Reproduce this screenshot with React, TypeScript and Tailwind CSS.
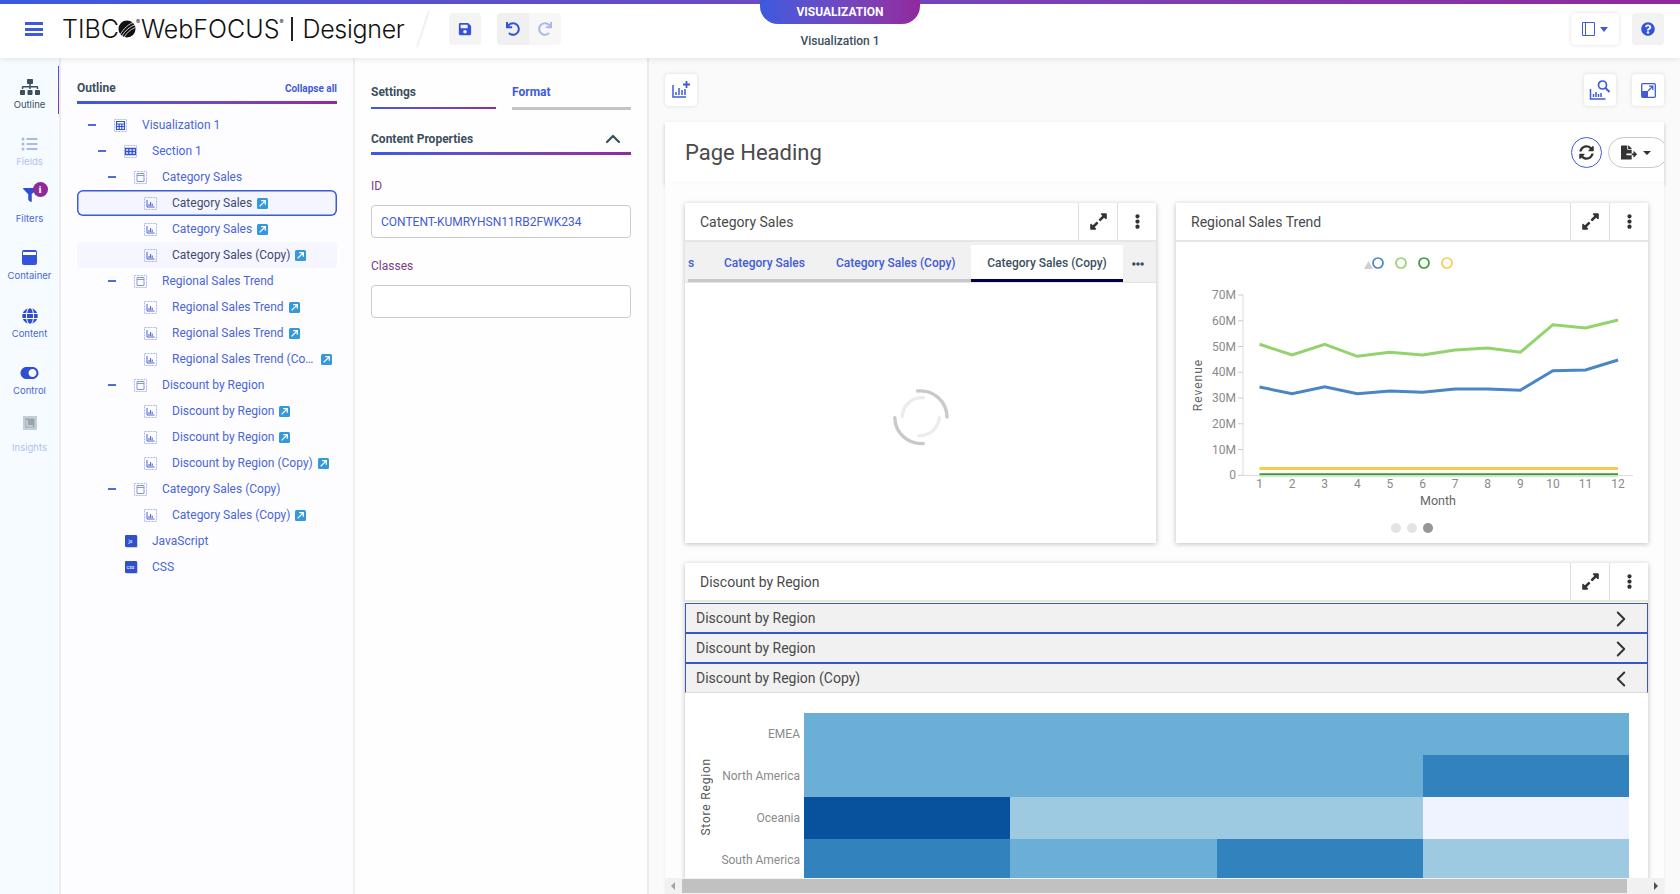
import type { ReactNode } from "react";
import { ChevronLeft, ChevronRight, ChevronUp } from "lucide-react";
import {
  FaEllipsisH,
  FaEllipsisV,
  FaExpandAlt,
  FaFileExport,
  FaFilter,
  FaGlobe,
  FaListUl,
  FaQuestionCircle,
  FaRedo,
  FaSave,
  FaSitemap,
  FaSyncAlt,
  FaToggleOn,
  FaUndo,
} from "react-icons/fa";

const GRADIENT = "bg-gradient-to-r from-[#3a5ae0] to-[#92289f]";

type RowKind = "viz" | "section" | "frame" | "chart" | "js" | "css";

interface TreeRow {
  label: string;
  level: number;
  kind: RowKind;
  dash?: boolean;
  link?: boolean;
  state?: "selected" | "hover";
}

const treeRows: TreeRow[] = [
  { label: "Visualization 1", level: 0, kind: "viz", dash: true },
  { label: "Section 1", level: 1, kind: "section", dash: true },
  { label: "Category Sales", level: 2, kind: "frame", dash: true },
  { label: "Category Sales", level: 3, kind: "chart", link: true, state: "selected" },
  { label: "Category Sales", level: 3, kind: "chart", link: true },
  { label: "Category Sales (Copy)", level: 3, kind: "chart", link: true, state: "hover" },
  { label: "Regional Sales Trend", level: 2, kind: "frame", dash: true },
  { label: "Regional Sales Trend", level: 3, kind: "chart", link: true },
  { label: "Regional Sales Trend", level: 3, kind: "chart", link: true },
  { label: "Regional Sales Trend (Co…", level: 3, kind: "chart", link: true },
  { label: "Discount by Region", level: 2, kind: "frame", dash: true },
  { label: "Discount by Region", level: 3, kind: "chart", link: true },
  { label: "Discount by Region", level: 3, kind: "chart", link: true },
  { label: "Discount by Region (Copy)", level: 3, kind: "chart", link: true },
  { label: "Category Sales (Copy)", level: 2, kind: "frame", dash: true },
  { label: "Category Sales (Copy)", level: 3, kind: "chart", link: true },
  { label: "JavaScript", level: 1, kind: "js" },
  { label: "CSS", level: 1, kind: "css" },
];

const indents = ["pl-[11px]", "pl-[21px]", "pl-[31px]", "pl-[41px]"];

const TreeIcon = ({ kind }: { kind: RowKind }) => {
  if (kind === "js" || kind === "css") {
    return (
      <span className="flex h-[12px] w-[12px] items-center justify-center rounded-[1px] bg-[#2f4fd0] text-[5px] leading-none text-white shadow-[1px_1px_0_#c9d2f2]">
        {kind === "js" ? "js" : "css"}
      </span>
    );
  }
  return (
    <svg width="13" height="13" viewBox="0 0 13 13" fill="none">
      <rect x="0.5" y="0.5" width="12" height="12" stroke="#a9b7ee" strokeDasharray="2 1" />
      {kind === "viz" && (
        <path d="M2.5 2.5h8v8h-8z M2.5 5h8 M2.5 7.5h8 M5.2 5v5.5 M7.8 5v5.5" stroke="#3553d1" strokeWidth="1.2" />
      )}
      {kind === "section" && (
        <path d="M1.5 3.5h10v6h-10z M1.5 6.5h10 M4.8 3.5v6 M8.2 3.5v6" stroke="#3553d1" strokeWidth="1.3" />
      )}
      {kind === "frame" && <path d="M3 2.5h7v8H3z M3 4.5h7" stroke="#8496e4" />}
      {kind === "chart" && <path d="M3 3v7h7.5 M5 9V7 M6.6 9V5 M8.2 9V6.5" stroke="#4a63cf" />}
    </svg>
  );
};

const LinkBadge = () => (
  <svg width="11" height="11" viewBox="0 0 11 11" className="ml-[5px] shrink-0">
    <rect width="11" height="11" rx="1.5" fill="#3498db" />
    <path d="M2.6 8.4 8 3 M4.2 2.7h4.1v4.1" stroke="#fff" strokeWidth="1.2" fill="none" />
  </svg>
);

const RailItem = ({
  label,
  icon,
  className,
  textClass = "text-[#4a66d8]",
}: {
  label: string;
  icon: ReactNode;
  className: string;
  textClass?: string;
}) => (
  <div className={`flex flex-col items-center justify-end ${className}`}>
    {icon}
    <span className={`text-[9.5px] leading-[12px] font-[Inter,sans-serif] ${textClass}`}>{label}</span>
  </div>
);

const LeftRail = () => (
  <aside className="relative flex w-[61px] shrink-0 flex-col border-r-2 border-[#ececec] bg-[#f6fbff]">
    <span className="absolute right-0 top-[8px] h-[48px] w-px bg-gradient-to-b from-[#3a5ae0] to-[#92289f]" />
    <RailItem
      label="Outline"
      className="h-[52.5px] gap-[4px]"
      textClass="text-[#3e4f5c]"
      icon={<FaSitemap className="h-[16px] w-[20px] text-[#3e4f5c]" />}
    />
    <RailItem
      label="Fields"
      className="h-[57.3px] gap-[4px]"
      textClass="text-[#b3c0f0]"
      icon={<FaListUl className="h-[16px] w-[17px] text-[#a9b8ef]" />}
    />
    <RailItem
      label="Filters"
      className="relative h-[57.3px] gap-[10px]"
      icon={
        <span className="relative flex h-[16px] w-[16px] items-center justify-center">
          <FaFilter className="h-[14px] w-[14px] text-[#2f4fd0]" />
          <span className="absolute left-[11px] top-[-5px] flex h-[15px] w-[15px] items-center justify-center rounded-full bg-[#8e2a9c] text-[11px] font-bold leading-none text-white font-[Liberation_Serif,serif]">
            i
          </span>
        </span>
      }
    />
    <RailItem
      label="Container"
      className="h-[57.3px] gap-[5px]"
      icon={
        <span className="flex h-[15px] w-[15px] flex-col rounded-[2px] bg-[#3453d8] px-px pt-[2px]">
          <span className="h-[3px] bg-white" />
        </span>
      }
    />
    <RailItem
      label="Content"
      className="h-[57.3px] gap-[4px]"
      icon={<FaGlobe className="h-[16px] w-[16px] text-[#2f4fd0]" />}
    />
    <RailItem
      label="Control"
      className="h-[57.3px] gap-[4px]"
      icon={<FaToggleOn className="h-[16px] w-[19px] text-[#2f4fd0]" />}
    />
    <RailItem
      label="Insights"
      className="h-[57.3px] gap-[12px]"
      textClass="text-[#b3c0f0]"
      icon={
        <svg width="14" height="14" viewBox="0 0 14 14">
          <rect width="14" height="14" fill="#c3ced6" />
          <rect x="2.5" y="2.5" width="9" height="9" fill="#95a5b0" />
          <path d="M4 4v6h6" stroke="#e7edf1" fill="none" />
        </svg>
      }
    />
  </aside>
);

const OutlinePanel = () => (
  <section className="w-[294px] shrink-0 border-r-2 border-[#f0f0f0] bg-[#fdfdff] pl-[16px] pr-[16px] pt-[21px]">
    <div className="flex h-[18px] items-center justify-between">
      <span className="text-[12px] font-bold text-[#3c4f5c]">Outline</span>
      <span className="text-[10px] font-bold text-[#3f5bd9]">Collapse all</span>
    </div>
    <div className={`mb-[8px] mt-[4px] h-[3px] ${GRADIENT}`} />
    {treeRows.map((row, i) => {
      const dark = row.state !== undefined;
      return (
        <div
          key={i}
          className={`flex h-[26px] items-center ${indents[row.level]} ${
            row.state === "selected"
              ? "rounded-[6px] bg-[#f4f5ff] shadow-[inset_0_0_0_1.5px_#3a5bd9]"
              : row.state === "hover"
                ? "rounded-[4px] bg-[#f5f6ff]"
                : ""
          }`}
        >
          <span className={`mr-[18px] h-[2px] w-[8px] shrink-0 ${row.dash ? "bg-[#4f6bdc]" : ""}`} />
          <span className="mr-[15px] flex w-[13px] shrink-0 justify-center">
            <TreeIcon kind={row.kind} />
          </span>
          <span
            className={`whitespace-nowrap text-[12px] ${dark ? "text-[#3d4a70]" : "text-[#4a66d8]"} ${
              row.label.endsWith("…") ? "w-[144px]" : ""
            }`}
          >
            {row.label}
          </span>
          {row.link && <LinkBadge />}
        </div>
      );
    })}
  </section>
);

const SettingsPanel = () => (
  <section className="w-[294px] shrink-0 border-r-2 border-[#ececec] bg-[#fefefe] px-[16px] pt-[25px]">
    <div className="flex gap-[16px]">
      <div className="w-[125px]">
        <div className="h-[18px] text-[12px] font-bold leading-[18px] text-[#3c4f5c]">Settings</div>
        <div className={`mt-[6px] h-[2px] ${GRADIENT}`} />
      </div>
      <div className="flex-1">
        <div className="h-[18px] text-[12px] font-bold leading-[18px] text-[#3f5bd9]">Format</div>
        <div className="mt-[6px] h-[3px] bg-[#c4c4c4]" />
      </div>
    </div>
    <div className="mt-[20px] flex h-[18px] items-center justify-between pr-[6px]">
      <span className="text-[12px] font-bold text-[#3c4f5c]">Content Properties</span>
      <ChevronUp className="h-[24px] w-[24px] text-[#33505e]" strokeWidth={2.2} />
    </div>
    <div className={`mt-[4px] h-[3px] ${GRADIENT}`} />
    <div className="mt-[24px] text-[12px] leading-[14px] text-[#7b3f85]">ID</div>
    <div className="mt-[12px] flex h-[33px] items-center rounded-[4px] border border-[#cccccc] bg-white px-[9px] text-[12px] text-[#3f5bd9]">
      CONTENT-KUMRYHSN11RB2FWK234
    </div>
    <div className="mt-[21px] text-[12px] leading-[14px] text-[#7b3f85]">Classes</div>
    <div className="mt-[12px] h-[33px] rounded-[4px] border border-[#cccccc] bg-white" />
  </section>
);

const ToolButton = ({ children }: { children: ReactNode }) => (
  <div className="flex h-[32px] w-[32px] items-center justify-center rounded-[4px] bg-white shadow-[0_0_4px_rgba(0,0,0,0.12)]">
    {children}
  </div>
);

const CardHeader = ({ title }: { title: string }) => (
  <div className="flex h-[39px] shrink-0 items-center border-b-2 border-[#e6e6e6] bg-white">
    <span className="flex-1 pl-[15px] pt-px text-[14px] text-[#4a4a4a]">{title}</span>
    <span className="flex h-full w-[39px] items-center justify-center border-l border-[#e0e0e0]">
      <FaExpandAlt className="h-[19px] w-[19px] text-[#333]" />
    </span>
    <span className="flex h-full w-[39px] items-center justify-center border-l border-[#e0e0e0]">
      <FaEllipsisV className="h-[15px] w-[15px] text-[#333]" />
    </span>
  </div>
);

const Spinner = () => (
  <svg width="60" height="60" viewBox="-30 -30 60 60" fill="none" strokeLinecap="round">
    <path d="M-3.3 -26 A26.5 26.5 0 0 1 26 0" stroke="#c9c9c9" strokeWidth="3.4" />
    <path d="M2.3 26.5 A26.5 26.5 0 0 1 -26.2 0.7" stroke="#c9c9c9" strokeWidth="3.4" />
    <path d="M2.3 -19.3 A19.5 19.5 0 0 0 -18.7 -0.7" stroke="#ececec" strokeWidth="3.4" />
    <path d="M-2 18.7 A19.5 19.5 0 0 0 18.3 0.7" stroke="#ececec" strokeWidth="3.4" />
  </svg>
);

const CategoryCard = () => (
  <div className="flex h-[340px] flex-col bg-white shadow-[0_1px_5px_rgba(0,0,0,0.25)]">
    <CardHeader title="Category Sales" />
    <div className="flex h-[41px] shrink-0 border-b border-[#e4e4e4] bg-[#f1f1f1] pl-[3px] text-[12px] font-medium">
      <div className="mt-auto flex h-[37px] w-[283px] items-start overflow-hidden border-b-[3px] border-[#c8c8c8] pt-[9px] text-[#3f5bd9]">
        <span className="w-[36px]">s</span>
        <span className="w-[112px]">Category Sales</span>
        <span>Category Sales (Copy)</span>
      </div>
      <div className="mt-auto flex h-[37px] w-[152px] items-center justify-center border-b-[3px] border-[#00004f] bg-white pt-[2px] text-[#3c4f5c]">
        Category Sales (Copy)
      </div>
      <div className="flex flex-1 items-center justify-center pr-[4px] pt-[3px]">
        <FaEllipsisH className="h-[12px] w-[12px] text-[#3c4f5c]" />
      </div>
    </div>
    <div className="flex flex-1 items-start justify-center pt-[104px]">
      <Spinner />
    </div>
  </div>
);

const months = [1, 2, 3, 4, 5, 6, 7, 8, 9, 10, 11, 12];
const blueLine = [561, 581, 560, 581, 573, 577, 567, 567, 571, 512, 510, 480];
const greenLine = [433, 465, 433, 469, 457, 465, 450, 444, 457, 374, 384, 360];
const yTicks = ["70M", "60M", "50M", "40M", "30M", "20M", "10M", "0"];

// x and y of the trend chart, in the card body's own pixels
const monthX = (i: number) => 83.5 + i * 32.6;
const toPoints = (values: number[]) =>
  values.map((v, i) => `${monthX(i)},${(v / 3 - 43).toFixed(1)}`).join(" ");

const TrendChart = () => (
  <svg width="472" height="300" viewBox="0 0 472 300" className="mt-px font-[Roboto,sans-serif]">
    <path d="M188 26l4.5-8l4.5 8z" fill="#cfcfcf" />
    {["#4a86c5", "#92d36e", "#3a9a33", "#fdc94d"].map((c, i) => (
      <circle key={c} cx={202 + i * 23} cy="20" r="5" fill="none" stroke={c} strokeWidth="1.7" />
    ))}
    <path d="M67 52V232.5H457" fill="none" stroke="#dcdcdc" />
    {yTicks.map((t, i) => (
      <g key={t}>
        <path d={`M62 ${52 + i * 25.75}h5`} stroke="#cccccc" />
        <text x="60" y={56 + i * 25.75} textAnchor="end" fontSize="12" fill="#8a8a8a">
          {t}
        </text>
      </g>
    ))}
    {months.map((m, i) => (
      <text key={m} x={monthX(i)} y="245" textAnchor="middle" fontSize="12" fill="#8a8a8a">
        {m}
      </text>
    ))}
    <polyline points={toPoints(greenLine)} fill="none" stroke="#92d36e" strokeWidth="3" />
    <polyline points={toPoints(blueLine)} fill="none" stroke="#4a86c5" strokeWidth="3" />
    <path d="M83.5 225.6H442" stroke="#fdc94d" strokeWidth="3" />
    <path d="M83.5 231.2H442" stroke="#3a9a33" strokeWidth="2" />
    <path d="M83.5 233.2H442" stroke="#d5e8d0" strokeWidth="2" />
    <text
      transform="translate(26 142) rotate(-90)"
      textAnchor="middle"
      fontSize="12"
      letterSpacing="1"
      fill="#666"
    >
      Revenue
    </text>
    <text x="262" y="262" textAnchor="middle" fontSize="12.5" fill="#666">
      Month
    </text>
    <circle cx="220" cy="285" r="5" fill="#e3e3e3" />
    <circle cx="236" cy="285" r="5" fill="#e3e3e3" />
    <circle cx="252" cy="285" r="5" fill="#969696" />
  </svg>
);

const TrendCard = () => (
  <div className="flex h-[340px] flex-col bg-white shadow-[0_1px_5px_rgba(0,0,0,0.25)]">
    <CardHeader title="Regional Sales Trend" />
    <TrendChart />
  </div>
);

const heatmap = [
  ["#6baed6", "#6baed6", "#6baed6", "#6baed6"],
  ["#6baed6", "#6baed6", "#6baed6", "#3182bd"],
  ["#08519c", "#9ecae1", "#9ecae1", "#eff3ff"],
  ["#3182bd", "#6baed6", "#3182bd", "#9ecae1"],
];
const regions = ["EMEA", "North America", "Oceania", "South America"];

const AccordionRow = ({ title, open }: { title: string; open?: boolean }) => (
  <div
    className={`flex h-[30px] items-center justify-between border bg-[#f1f1f1] pl-[10px] pr-[13px] pt-px text-[14px] text-[#4a4a4a] ${
      open ? "border-[#3a55c8] border-b-[#dddddd]" : "border-[#3a55c8]"
    }`}
  >
    <span>{title}</span>
    {open ? (
      <ChevronLeft className="h-[26px] w-[26px] text-[#333]" strokeWidth={1.8} />
    ) : (
      <ChevronRight className="h-[26px] w-[26px] text-[#333]" strokeWidth={1.8} />
    )}
  </div>
);

const DiscountCard = () => (
  <div className="bg-white shadow-[0_1px_5px_rgba(0,0,0,0.25)]">
    <CardHeader title="Discount by Region" />
    <div className="mt-px">
      <AccordionRow title="Discount by Region" />
      <AccordionRow title="Discount by Region" />
      <AccordionRow title="Discount by Region (Copy)" open />
    </div>
    <div className="flex pb-[40px] pr-[19px] pt-[20px]">
      <div className="flex w-[119px] shrink-0">
        <div className="flex w-[30px] items-center justify-end">
          <span className="rotate-180 text-[12px] tracking-[0.8px] text-[#555] [writing-mode:vertical-rl]">
            Store Region
          </span>
        </div>
        <div className="flex-1 pr-[4px] text-right text-[12px] text-[#8a8a8a]">
          {regions.map((r) => (
            <div key={r} className="flex h-[42px] items-center justify-end pb-px">
              {r}
            </div>
          ))}
        </div>
      </div>
      <div className="grid flex-1 grid-cols-4">
        {heatmap.flat().map((c, i) => (
          <div key={i} className="h-[42px]" style={{ backgroundColor: c }} />
        ))}
      </div>
    </div>
  </div>
);

const Canvas = () => (
  <main className="flex min-w-0 flex-1 flex-col bg-[#fafafa] pl-[16px] pr-[16px] pt-[16px]">
    <div className="flex shrink-0 justify-between">
      <ToolButton>
        <svg width="20" height="20" viewBox="0 0 20 20" fill="none" stroke="#3f5bd9">
          <path d="M2 5v12h13 M5 15v-3 M8 15V8 M11 15v-5 M14 15V9" strokeWidth="1.5" />
          <path d="M15.5 1v7 M12 4.5h7" strokeWidth="1.8" />
        </svg>
      </ToolButton>
      <div className="flex gap-[16px]">
        <ToolButton>
          <svg width="22" height="22" viewBox="0 0 22 22" fill="none" stroke="#3f5bd9">
            <path d="M1.5 10v10h15 M4.5 18v-3 M7 18v-5 M9.5 18v-3 M12 18v-4" strokeWidth="1.5" />
            <circle cx="13.5" cy="6" r="4" strokeWidth="1.7" />
            <path d="M16.5 9l4 4" strokeWidth="2" />
          </svg>
        </ToolButton>
        <ToolButton>
          <svg width="15" height="15" viewBox="0 0 15 15" fill="none">
            <rect x="0.7" y="0.7" width="13.6" height="13.6" rx="1" stroke="#3f5bd9" strokeWidth="1.3" />
            <rect x="1" y="8" width="6" height="6" fill="#3f5bd9" />
            <path d="M7 8l4.5-4.5 M8 3.2h3.8V7" stroke="#3f5bd9" strokeWidth="1.3" />
          </svg>
        </ToolButton>
      </div>
    </div>

    <div className="mt-[16px] flex h-[61px] shrink-0 items-center justify-between overflow-hidden bg-white pl-[20px] shadow-[0_2px_4px_rgba(0,0,0,0.22)]">
      <span className="text-[22px] text-[#4a4a4a]">Page Heading</span>
      <div className="-mr-[4px] flex items-center gap-[6px]">
        <span className="flex h-[31px] w-[31px] items-center justify-center rounded-full border border-[#3f5bd9]">
          <FaSyncAlt className="h-[15px] w-[15px] text-[#333]" />
        </span>
        <span className="flex h-[31px] w-[60px] items-center gap-[6px] rounded-full border border-[#c8c8c8] pl-[12px]">
          <FaFileExport className="h-[15px] w-[16px] text-[#333]" />
          <span className="border-x-[4px] border-t-[4px] border-x-transparent border-t-[#333]" />
        </span>
      </div>
    </div>

    <div className="flex min-h-0 flex-1 flex-col bg-[#fdfdfd] shadow-[0_0_3px_rgba(0,0,0,0.06)]">
      <div className="min-h-0 flex-1 overflow-hidden pl-[20px] pr-[16px] pt-[20px]">
        <div className="grid grid-cols-[471px_472px] gap-[20px]">
          <CategoryCard />
          <TrendCard />
        </div>
        <div className="mt-[20px]">
          <DiscountCard />
        </div>
      </div>
      <div className="flex h-[16px] shrink-0 items-center bg-[#f1f1f1]">
        <span className="ml-[6px] border-y-[4px] border-r-[4px] border-y-transparent border-r-[#a3a3a3]" />
        <div className="ml-[7px] h-[14px] w-[945px] bg-[#c1c1c1]" />
        <span className="ml-auto mr-[6px] border-y-[4px] border-l-[4px] border-y-transparent border-l-[#505050]" />
      </div>
    </div>
  </main>
);

const Header = () => (
  <header className="relative z-10 grid h-[54px] shrink-0 grid-cols-[760px_160px_1fr] bg-white shadow-[0_2px_6px_rgba(0,0,0,0.08)]">
    <div className="flex items-center pb-[4px]">
      <div className="ml-[25px] flex h-[14px] w-[18px] flex-col justify-between">
        <span className="h-[3px] bg-[#3f5bd9]" />
        <span className="h-[3px] bg-[#3f5bd9]" />
        <span className="h-[3px] bg-[#3f5bd9]" />
      </div>
      <div className="ml-[19px] flex w-[352px] items-center whitespace-nowrap text-[25px] leading-none text-[#111] font-[Inter,sans-serif]">
        <span className="font-light">TIBC</span>
        <svg width="18" height="18" viewBox="0 0 19 19" className="ml-[-1px]">
          <circle cx="9.5" cy="9.5" r="9" fill="#111" />
          <path d="M2 16 C6 9 11 4 18 2 M4 17 C8 11 12 7 18 5 M6.5 18 C10 13 13 10 18 8" stroke="#fff" strokeWidth="0.8" fill="none" />
        </svg>
        <span className="mb-[14px] text-[6px]">®</span>
        <span className="ml-[1px] font-light">WebFOCUS</span>
        <span className="mb-[14px] text-[6px]">®</span>
        <span className="ml-[8px] h-[24px] w-[2px] bg-[#222]" />
        <span className="ml-[9px] font-light tracking-[-0.3px]">Designer</span>
      </div>
      <span className="ml-[8px] h-[38px] w-[2px] rotate-[18deg] bg-[#f1f1f1]" />
      <div className="ml-[25px] flex h-[32px] w-[32px] items-center justify-center rounded-[4px] bg-[#f4f4f4]">
        <FaSave className="h-[14px] w-[14px] text-[#3453d8]" />
      </div>
      <div className="ml-[16px] flex h-[32px] w-[64px] overflow-hidden rounded-[4px]">
        <div className="flex w-[32px] items-center justify-center bg-[#f0f0f0]">
          <FaUndo className="h-[14px] w-[14px] text-[#3453d8]" />
        </div>
        <div className="flex w-[32px] items-center justify-center bg-[#f7f7f7]">
          <FaRedo className="h-[14px] w-[14px] text-[#a9b8ef]" />
        </div>
      </div>
    </div>
    <div className="flex flex-col items-center">
      <div className={`-mt-[4px] flex h-[24px] w-[160px] items-center justify-center rounded-b-[18px] text-[12px] font-bold text-white ${GRADIENT}`}>
        VISUALIZATION
      </div>
      <div className="mt-[10px] text-[12px] font-medium leading-[14px] text-[#3c4f5c]">Visualization 1</div>
    </div>
    <div className="flex items-center justify-end gap-[13px] pb-[4px] pr-[16px]">
      <div className="flex h-[32px] w-[48px] items-center justify-center gap-[5px] rounded-[4px] bg-white shadow-[0_0_4px_rgba(0,0,0,0.12)]">
        <svg width="13" height="14" viewBox="0 0 13 14" fill="none" stroke="#3f5bd9">
          <path d="M0.5 0.5h12v13H0.5z M3.5 0.5v13" />
        </svg>
        <span className="border-x-[4px] border-t-[5px] border-x-transparent border-t-[#3f5bd9]" />
      </div>
      <div className="flex h-[32px] w-[32px] items-center justify-center rounded-[4px] bg-[#f2f2f2]">
        <FaQuestionCircle className="h-[14px] w-[14px] text-[#3453d8]" />
      </div>
    </div>
  </header>
);

const App = () => (
  <div className="flex h-screen flex-col overflow-hidden bg-white font-[Roboto,sans-serif]">
    <div className={`h-[4px] shrink-0 ${GRADIENT}`} />
    <Header />
    <div className="flex min-h-0 flex-1">
      <LeftRail />
      <OutlinePanel />
      <SettingsPanel />
      <Canvas />
    </div>
  </div>
);

export default App;
